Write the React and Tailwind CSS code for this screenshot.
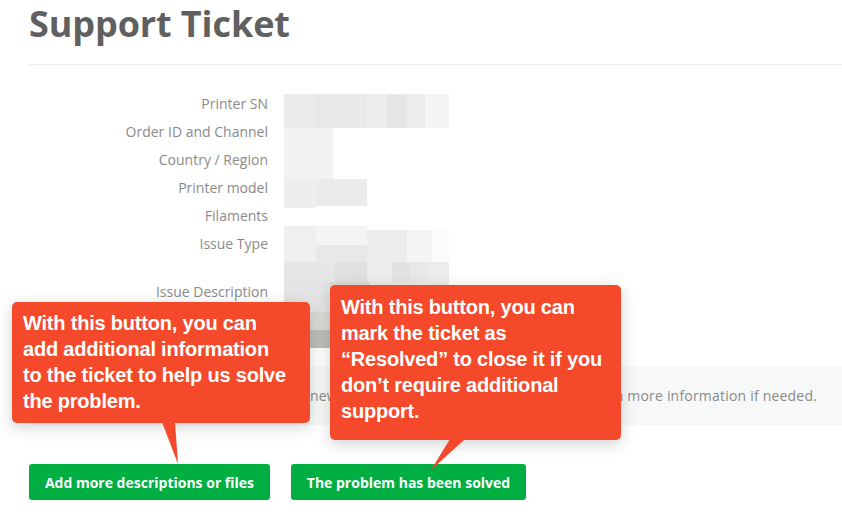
import React from 'react';

const rows = [
    'Printer SN',
    'Order ID and Channel',
    'Country / Region',
    'Printer model',
    'Filaments',
    'Issue Type',
];

// pixelated (blurred) ticket values: [x, y, w, h, fill]
const blocks = [
    [0, 0, 31, 34, '#ebebeb'], [31, 0, 18, 34, '#e8e8e8'], [49, 0, 34, 34, '#e9e9e9'],
    [83, 0, 20, 34, '#eeeeee'], [103, 0, 20, 34, '#e6e6e4'], [123, 0, 18, 34, '#ececec'],
    [141, 0, 24, 34, '#f5f5f5'],
    [0, 34, 49, 51, '#f2f2f2'],
    [0, 85, 32, 29, '#eeeeee'], [32, 85, 17, 27, '#ebebeb'], [49, 85, 34, 27, '#ebebeb'],
    [0, 132, 32, 36, '#efefef'], [32, 132, 51, 19, '#f4f4f4'], [32, 151, 51, 17, '#e8e8e8'],
    [83, 136, 40, 32, '#ececec'], [123, 136, 25, 32, '#f5f5f5'], [148, 136, 17, 32, '#fbfbfb'],
    [0, 168, 51, 20, '#e6e6e6'], [51, 168, 32, 20, '#e0e0df'], [83, 168, 25, 20, '#ececec'],
    [108, 168, 18, 20, '#e2e2e2'], [126, 168, 17, 20, '#e8e8e8'], [143, 168, 22, 20, '#ececec'],
    [0, 188, 46, 30, '#e4e4e4'], [46, 188, 40, 30, '#dcdcd4'], [86, 188, 79, 20, '#ececec'],
    [0, 218, 26, 18, '#d0d0cc'], [26, 218, 25, 18, '#dcdcd4'],
    [0, 236, 60, 18, '#bdbfbb'],
];

const Pixelated = () => (
    <svg width="165" height="254" viewBox="0 0 165 254" className="block">
        {blocks.map(([x, y, w, h, f], i) => (
            <rect key={i} x={x} y={y} width={w} height={h} fill={f} />
        ))}
    </svg>
);

function App() {
    return (
        <div className="relative w-[842px] h-[519px] overflow-hidden bg-white font-['Open_Sans',sans-serif]">
            <div className="pl-[29px]">
                <h1 className="pt-[1px] text-[36px] leading-[46px] font-bold text-[#606060] tracking-[-0.1px]">
                    Support Ticket
                </h1>
                <div className="mt-[17px] border-t border-[#ececec]" />

                <div className="mt-[27px] flex gap-4">
                    <div className="w-[239px] -mt-[2px] flex flex-col items-end text-[14px] text-[#8a8a8a]">
                        {rows.map((r) => (
                            <div key={r} className="h-[28px] leading-[28px]">{r}</div>
                        ))}
                        <div className="mt-[20px] h-[28px] leading-[28px]">Issue Description</div>
                    </div>
                    <div className="pt-[2px]">
                        <Pixelated />
                    </div>
                </div>

                <div className="mt-[18px] h-[59px] bg-[#f7f8f8] flex items-center pl-[6px] text-[14px] tracking-[0.2px] text-[#8a8a8a] whitespace-nowrap">
                    You will receive an email when there is a new message from our team. Please reply with more information if needed.
                </div>

                <div className="mt-[39px] flex gap-[21px]">
                    <button className="w-[241px] h-[36px] rounded-[3px] bg-[#00ae42] text-white text-[14px] font-bold">
                        Add more descriptions or files
                    </button>
                    <button className="w-[235px] h-[36px] rounded-[3px] bg-[#00ae42] text-white text-[14px] font-bold">
                        The problem has been solved
                    </button>
                </div>
            </div>

            {/* Tooltip 1 */}
            <div className="absolute left-[12px] top-[302px] w-[298px] h-[121px] rounded-[5px] bg-[#f4492a] shadow-[0_4px_16px_rgba(0,0,0,0.18)] px-[11px] pt-[8px] text-white text-[20px] leading-[26px] font-bold font-['Liberation_Sans',Arial,sans-serif] tracking-[-0.2px] whitespace-nowrap">
                With this button, you can<br />
                add additional information<br />
                to the ticket to help us solve<br />
                the problem.
                <svg className="absolute left-[150px] top-[120px]" width="20" height="42" viewBox="0 0 20 42">
                    <polygon points="0,0 13,0 16,42" fill="#f4492a" />
                </svg>
            </div>

            {/* Tooltip 2 */}
            <div className="absolute left-[330px] top-[285px] w-[291px] h-[155px] rounded-[5px] bg-[#f4492a] shadow-[0_4px_16px_rgba(0,0,0,0.18)] pl-[11px] pr-[8px] pt-[9px] text-white text-[20px] leading-[26px] font-bold font-['Liberation_Sans',Arial,sans-serif] tracking-[-0.2px]">
                With this button, you can mark the ticket as “Resolved” to close it if you don’t require additional support.
                <svg className="absolute left-[100px] top-[154px]" width="36" height="32" viewBox="0 0 36 32">
                    <polygon points="20,0 35,0 1,31" fill="#f4492a" />
                </svg>
            </div>
        </div>
    );
}

export default App;
